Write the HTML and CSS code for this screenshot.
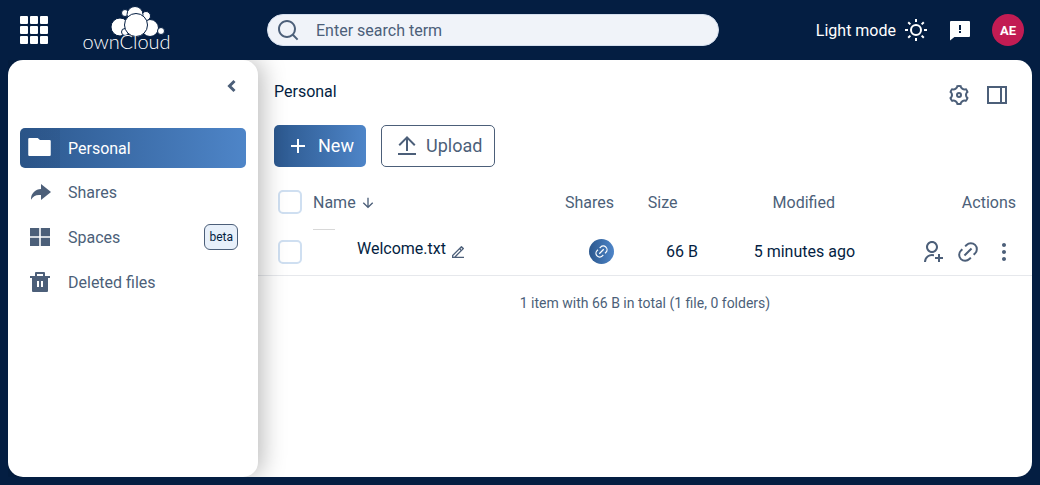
FILE: index.html
```html
<!DOCTYPE html>
<html lang="en">
<head>
  <meta charset="UTF-8" />
  <title>ownCloud</title>
  <link rel="stylesheet" href="styles.css">
</head>
<body>
  <!-- Top bar -->
  <header class="topbar">
    <svg class="apps" viewBox="0 0 28 28" fill="#fff">
      <rect x="0" y="0" width="8" height="8" rx="1"/><rect x="10" y="0" width="8" height="8" rx="1"/><rect x="20" y="0" width="8" height="8" rx="1"/>
      <rect x="0" y="10" width="8" height="8" rx="1"/><rect x="10" y="10" width="8" height="8" rx="1"/><rect x="20" y="10" width="8" height="8" rx="1"/>
      <rect x="0" y="20" width="8" height="8" rx="1"/><rect x="10" y="20" width="8" height="8" rx="1"/><rect x="20" y="20" width="8" height="8" rx="1"/>
    </svg>
    <div class="brand">
      <svg class="cloud" viewBox="110 6 56 31" fill="#fff" stroke="#041e42" stroke-width="1">
        <circle cx="120" cy="27" r="9"/>
        <circle cx="150" cy="28" r="8.5"/>
        <circle cx="161" cy="31" r="3.5"/>
        <circle cx="125" cy="13" r="3.5"/>
        <circle cx="146" cy="16" r="4.5"/>
        <circle cx="135" cy="14.5" r="8"/>
        <circle cx="125" cy="32" r="3.5"/>
        <circle cx="136" cy="25" r="11.5"/>
      </svg>
      <span class="wordmark">ownCloud</span>
    </div>
    <div class="search">
      <svg class="icon-search" viewBox="0 0 24 24"><path d="M18.031 16.617l4.283 4.282-1.415 1.415-4.282-4.283A8.96 8.96 0 0 1 11 20c-4.968 0-9-4.032-9-9s4.032-9 9-9 9 4.032 9 9a8.96 8.96 0 0 1-1.969 5.617zm-2.006-.742A6.977 6.977 0 0 0 18 11c0-3.868-3.133-7-7-7-3.868 0-7 3.132-7 7 0 3.867 3.132 7 7 7a6.977 6.977 0 0 0 4.875-1.975l.15-.15z"/></svg>
      <span>Enter search term</span>
    </div>
    <div class="top-right">
      <span class="theme-label">Light mode</span>
      <svg class="icon-top" viewBox="0 0 24 24"><path d="M12 18a6 6 0 1 1 0-12 6 6 0 0 1 0 12zm0-2a4 4 0 1 0 0-8 4 4 0 0 0 0 8zM11 1h2v3h-2V1zm0 19h2v3h-2v-3zM3.515 4.929l1.414-1.414L7.05 5.636 5.636 7.05 3.515 4.93zM16.95 18.364l1.414-1.414 2.121 2.121-1.414 1.414-2.121-2.121zm2.121-14.85l1.414 1.415-2.121 2.121-1.414-1.414 2.121-2.121zM5.636 16.95l1.414 1.414-2.121 2.121-1.414-1.414 2.121-2.121zM23 11v2h-3v-2h3zM4 11v2H1v-2h3z"/></svg>
      <svg class="icon-top feedback" viewBox="0 0 24 24"><path d="M6.455 19L2 22.5V4a1 1 0 0 1 1-1h18a1 1 0 0 1 1 1v14a1 1 0 0 1-1 1H6.455zM11 13v2h2v-2h-2zm0-6v5h2V7h-2z"/></svg>
      <div class="avatar">AE</div>
    </div>
  </header>

  <main class="main">
    <!-- Left navigation -->
    <nav class="sidebar">
      <div class="collapse">
        <svg viewBox="0 0 12 14" fill="none" stroke="#4c5f79" stroke-width="3"><path d="M8.5 2L3.5 7l5 5"/></svg>
      </div>
      <a class="nav-item active">
        <span class="nav-icon"><svg class="folder" viewBox="0 0 24 24" preserveAspectRatio="none"><path d="M12.414 5H21a1 1 0 0 1 1 1v14a1 1 0 0 1-1 1H3a1 1 0 0 1-1-1V4a1 1 0 0 1 1-1h7.414l2 2z"/></svg></span>
        <span>Personal</span>
      </a>
      <a class="nav-item">
        <span class="nav-icon"><svg viewBox="0 0 24 24"><path d="M13 14h-2a8.999 8.999 0 0 0-7.968 4.81A10.136 10.136 0 0 1 3 18C3 12.477 7.477 8 13 8V3l10 8-10 8v-5z"/></svg></span>
        <span>Shares</span>
      </a>
      <a class="nav-item">
        <span class="nav-icon"><svg viewBox="0 0 24 24"><path d="M2 3h9.2v8.2H2zM12.8 3H22v8.2h-9.2zM2 12.8h9.2V21H2zM12.8 12.8H22V21h-9.2z"/></svg></span>
        <span>Spaces</span>
        <span class="badge">beta</span>
      </a>
      <a class="nav-item">
        <span class="nav-icon"><svg viewBox="0 0 24 24"><path d="M17 6h5v2h-2v13a1 1 0 0 1-1 1H5a1 1 0 0 1-1-1V8H2V6h5V3a1 1 0 0 1 1-1h8a1 1 0 0 1 1 1v3zm-8 5v6h2v-6H9zm4 0v6h2v-6h-2zM9 4v2h6V4H9z"/></svg></span>
        <span>Deleted files</span>
      </a>
    </nav>

    <!-- File list -->
    <section class="content">
      <div class="crumbs">
        <span class="crumb">Personal</span>
        <div class="view-btns">
          <svg class="icon-view" viewBox="0 0 24 24"><path d="M3.34 17a10.018 10.018 0 0 1-.978-2.326 3 3 0 0 0 .002-5.347A9.99 9.99 0 0 1 4.865 4.99a3 3 0 0 0 4.631-2.674 9.99 9.99 0 0 1 5.007.002 3 3 0 0 0 4.632 2.672c.579.59 1.093 1.265 1.525 2.01.433.749.757 1.53.978 2.326a3 3 0 0 0-.002 5.347 9.99 9.99 0 0 1-2.501 4.337 3 3 0 0 0-4.631 2.674 9.99 9.99 0 0 1-5.007-.002 3 3 0 0 0-4.632-2.672A10.018 10.018 0 0 1 3.34 17zm5.66.196a4.993 4.993 0 0 1 2.25 2.77c.499.047 1 .048 1.499.001A4.993 4.993 0 0 1 15 17.197a4.993 4.993 0 0 1 3.525-.565c.29-.408.54-.843.748-1.298A4.993 4.993 0 0 1 18 12c0-1.26.47-2.437 1.273-3.334a8.126 8.126 0 0 0-.75-1.298A4.993 4.993 0 0 1 15 6.804a4.993 4.993 0 0 1-2.25-2.77c-.499-.047-1-.048-1.499-.001A4.993 4.993 0 0 1 9 6.803a4.993 4.993 0 0 1-3.525.565 7.99 7.99 0 0 0-.748 1.298A4.993 4.993 0 0 1 6 12c0 1.26-.47 2.437-1.273 3.334a8.126 8.126 0 0 0 .75 1.298A4.993 4.993 0 0 1 9 17.196zM12 15a3 3 0 1 1 0-6 3 3 0 0 1 0 6zm0-2a1 1 0 1 0 0-2 1 1 0 0 0 0 2z"/></svg>
          <svg class="icon-view" viewBox="0 0 24 24"><path fill-rule="evenodd" d="M2 3h20v18H2zM4 5v14h11V5zM17 5v14h3V5z"/></svg>
        </div>
      </div>

      <div class="actions">
        <button class="btn btn-new">
          <svg viewBox="0 0 24 24"><path d="M11 11V5h2v6h6v2h-6v6h-2v-6H5v-2h6z"/></svg>
          New
        </button>
        <button class="btn btn-upload">
          <svg viewBox="0 0 24 24"><path d="M3 19h18v2H3v-2zM13 5.828V17h-2V5.828L4.929 11.9l-1.414-1.414L12 2l8.485 8.485-1.414 1.414L13 5.83z"/></svg>
          Upload
        </button>
      </div>

      <div class="row head">
        <span class="check"></span>
        <span class="name-head">Name
          <svg viewBox="0 0 24 24"><path d="M13 16.172l5.364-5.364 1.414 1.414L12 20l-7.778-7.778 1.414-1.414L11 16.172V4h2v12.172z"/></svg>
        </span>
        <span>Shares</span>
        <span class="size">Size</span>
        <span class="modified">Modified</span>
        <span class="right">Actions</span>
      </div>

      <div class="row file">
        <span class="check"></span>
        <span class="name-cell">
          <span class="thumb"></span>
          <span class="filename">Welcome.txt</span>
          <svg class="rename" viewBox="0 0 24 24"><path d="M5 19h1.414l9.314-9.314-1.414-1.414L5 17.586V19zm16 2H3v-4.243L16.435 3.322a1 1 0 0 1 1.414 0l2.829 2.829a1 1 0 0 1 0 1.414L9.243 19H21v2zM15.728 7.272l1.414 1.414 1.414-1.414-1.414-1.414-1.414 1.414z"/></svg>
        </span>
        <span class="share-cell">
          <span class="share-dot"><svg viewBox="0 0 24 24"><path d="M18.364 15.536L16.95 14.12l1.414-1.414a5 5 0 1 0-7.071-7.071L9.879 7.05 8.464 5.636 9.88 4.222a7 7 0 0 1 9.9 9.9l-1.415 1.414zm-2.828 2.828l-1.415 1.414a7 7 0 0 1-9.9-9.9l1.415-1.414L7.05 9.88l-1.414 1.414a5 5 0 1 0 7.071 7.071l1.414-1.414 1.415 1.414zm-.708-10.607l1.415 1.415-7.071 7.07-1.415-1.414 7.071-7.07z"/></svg></span>
        </span>
        <span class="right">66 B</span>
        <span class="right">5 minutes ago</span>
        <span class="row-actions">
          <svg viewBox="0 0 24 24"><path d="M14 14.252v2.09A6 6 0 0 0 6 22l-2-.001a8 8 0 0 1 10-7.748zM12 13c-3.315 0-6-2.685-6-6s2.685-6 6-6 6 2.685 6 6-2.685 6-6 6zm0-2c2.21 0 4-1.79 4-4s-1.79-4-4-4-4 1.79-4 4 1.79 4 4 4zm6 6v-3h2v3h3v2h-3v3h-2v-3h-3v-2h3z"/></svg>
          <svg viewBox="0 0 24 24"><path d="M18.364 15.536L16.95 14.12l1.414-1.414a5 5 0 1 0-7.071-7.071L9.879 7.05 8.464 5.636 9.88 4.222a7 7 0 0 1 9.9 9.9l-1.415 1.414zm-2.828 2.828l-1.415 1.414a7 7 0 0 1-9.9-9.9l1.415-1.414L7.05 9.88l-1.414 1.414a5 5 0 1 0 7.071 7.071l1.414-1.414 1.415 1.414zm-.708-10.607l1.415 1.415-7.071 7.07-1.415-1.414 7.071-7.07z"/></svg>
          <svg viewBox="0 0 24 24"><path d="M12 3c-1.1 0-2 .9-2 2s.9 2 2 2 2-.9 2-2-.9-2-2-2zm0 14c-1.1 0-2 .9-2 2s.9 2 2 2 2-.9 2-2-.9-2-2-2zm0-7c-1.1 0-2 .9-2 2s.9 2 2 2 2-.9 2-2-.9-2-2-2z"/></svg>
        </span>
      </div>

      <p class="summary">1 item with 66 B in total (1 file, 0 folders)</p>
    </section>
  </main>
</body>
</html>
```

FILE: styles.css
```css
/* Reset */
* {
  margin: 0;
  padding: 0;
  box-sizing: border-box;
}
html, body {
  width: 100%;
  height: 100%;
  overflow: hidden;
  font-family: Roboto, Arial, sans-serif;
  color: #041e42;
  background: #041e42;
}
body {
  display: flex;
  flex-direction: column;
}
/* Top bar */
.topbar {
  height: 60px;
  flex: none;
  display: flex;
  align-items: center;
  padding: 0 16px 0 20px;
  color: #fff;
}
.apps {
  width: 28px;
  height: 28px;
}
.brand {
  width: 89px;
  margin-left: 34px;
  align-self: flex-start;
  margin-top: 6px;
  display: flex;
  flex-direction: column;
}
.cloud {
  width: 56px;
  height: 31px;
  margin-left: 28px;
}
.wordmark {
  font-family: Lato, sans-serif;
  font-weight: 300;
  font-size: 20px;
  line-height: 20px;
  margin-top: -6px;
  text-align: center;
  white-space: nowrap;
}
.search {
  width: 452px;
  height: 32px;
  margin-left: 96px;
  background: #f0f3f9;
  border: 1px solid #d5dfee;
  border-radius: 16px;
  display: flex;
  align-items: center;
  padding-left: 8px;
  font-size: 16px;
  color: #4c5f79;
}
.icon-search {
  width: 24px;
  height: 24px;
  fill: #4c5f79;
  margin-right: 16px;
}
.top-right {
  margin-left: auto;
  display: flex;
  align-items: center;
}
.theme-label {
  font-size: 16px;
  margin-right: 8px;
}
.icon-top {
  width: 24px;
  height: 24px;
  fill: #fff;
}
.feedback {
  margin-left: 20px;
}
.avatar {
  width: 32px;
  height: 32px;
  margin-left: 20px;
  border-radius: 50%;
  background: #c21c53;
  color: #fff;
  font-size: 13px;
  font-weight: 700;
  display: flex;
  align-items: center;
  justify-content: center;
}
/* Main panel */
.main {
  flex: 1;
  display: flex;
  margin: 0 8px 8px;
  overflow: hidden;
  min-height: 0;
}
.sidebar {
  position: relative;
  z-index: 1;
  width: 250px;
  flex: none;
  background: #fff;
  border-radius: 15px;
  box-shadow: 4px 0 24px rgba(0, 0, 0, 0.28);
  padding: 0 12px;
  display: flex;
  flex-direction: column;
  gap: 5px;
}
.collapse {
  height: 63px;
  display: flex;
  justify-content: flex-end;
  padding: 19px 8px 0 0;
}
.collapse svg {
  width: 12px;
  height: 14px;
}
.nav-item {
  height: 40px;
  display: flex;
  align-items: center;
  border-radius: 5px;
  font-size: 16px;
  color: #4c5f79;
  padding: 0 8px;
}
.nav-item + .nav-item {
  margin-top: -0.3px;
}
.nav-icon {
  width: 40px;
  flex: none;
  display: flex;
}
.nav-icon svg {
  width: 24px;
  height: 24px;
  fill: #4c5f79;
}
.nav-item.active {
  color: #fff;
  background: linear-gradient(90deg, rgba(0, 0, 0, 0.05) 40px, transparent 40px), linear-gradient(90deg, #2c588e, #4e85c8);
}
.nav-item.active .nav-icon svg {
  fill: #fff;
}
.nav-icon .folder {
  width: 27px;
  height: 24px;
  margin: -2px 0 0 -2px;
}
.badge {
  margin-left: auto;
  font-size: 12px;
  line-height: 14px;
  color: #041e42;
  background: #e8f0fa;
  border: 1px solid #4c5f79;
  border-radius: 6px;
  padding: 5px 4px;
}
/* File list, runs on under the sidebar so its corners sit on white */
.content {
  flex: 1;
  min-width: 0;
  margin-left: -20px;
  padding: 22px 0 0 20px;
  background: #fff;
  border-radius: 0 15px 15px 0;
  font-size: 16px;
}
.crumbs {
  height: 43px;
  padding: 0 16px;
  display: flex;
  justify-content: space-between;
}
.crumb {
  font-size: 16px;
  line-height: 18px;
  padding-top: 1px;
}
.view-btns {
  display: flex;
  gap: 14px;
  padding: 1px 7px 0 0;
}
.icon-view {
  width: 24px;
  height: 24px;
  fill: #4c5f79;
}
.actions {
  display: flex;
  gap: 15px;
  padding-left: 16px;
}
.btn {
  height: 42px;
  display: flex;
  align-items: center;
  font-family: inherit;
  font-size: 18px;
  border-radius: 5px;
  padding-bottom: 1px;
}
.btn svg {
  width: 24px;
  height: 24px;
}
.btn-new {
  width: 92px;
  padding-left: 12px;
  gap: 8px;
  border: none;
  color: #fff;
  background: linear-gradient(90deg, #2c588e, #4e85c8);
}
.btn-new svg {
  fill: #fff;
}
.btn-upload {
  width: 114px;
  padding-left: 13px;
  gap: 7px;
  background: #fff;
  border: 1px solid #4c5f79;
  color: #4c5f79;
}
.btn-upload svg {
  fill: #4c5f79;
}
/* Grid columns are shared by header and rows */
.row {
  display: grid;
  grid-template-columns: 35px 252px 49px 84px 157px 161px;
  align-items: center;
  padding-left: 20px;
  padding-right: 16px;
}
.head {
  height: 48px;
  margin-top: 11px;
  color: #4c5f79;
}
.file {
  height: 50px;
  border-bottom: 1px solid #e6e8ec;
  padding-top: 2px;
}
.check {
  width: 24px;
  height: 24px;
  border: 2px solid #cfdff1;
  border-radius: 5px;
  background: #fff;
}
.name-head {
  display: flex;
  align-items: center;
  gap: 4px;
}
.name-head svg {
  width: 16px;
  height: 16px;
  fill: #4c5f79;
  margin-top: 1px;
}
.size {
  text-align: right;
  padding-right: 20.5px;
}
.modified {
  text-align: right;
  padding-right: 20px;
}
.right {
  text-align: right;
}
.name-cell {
  position: relative;
  display: flex;
  align-items: center;
  padding-left: 44px;
  margin-top: -7px;
}
/* Empty thumbnail, only its top edge shows */
.thumb {
  position: absolute;
  left: 0;
  top: -8px;
  width: 22px;
  border-top: 1px solid #d8d8d8;
}
.rename {
  width: 16px;
  height: 16px;
  fill: #4c5f79;
  margin: 7px 0 0 4px;
}
.share-cell {
  padding-left: 24px;
  display: flex;
}
.share-dot {
  width: 25px;
  height: 25px;
  border-radius: 50%;
  background: linear-gradient(90deg, #2c588e, #4e85c8);
  display: flex;
  align-items: center;
  justify-content: center;
}
.share-dot svg {
  width: 15px;
  height: 15px;
  fill: #fff;
}
.row-actions {
  display: flex;
  justify-content: flex-end;
  gap: 12px;
}
.row-actions svg {
  width: 24px;
  height: 24px;
  fill: #4c5f79;
}
.summary {
  text-align: center;
  font-size: 14px;
  color: #4c5f79;
  margin-top: 19px;
}
```
